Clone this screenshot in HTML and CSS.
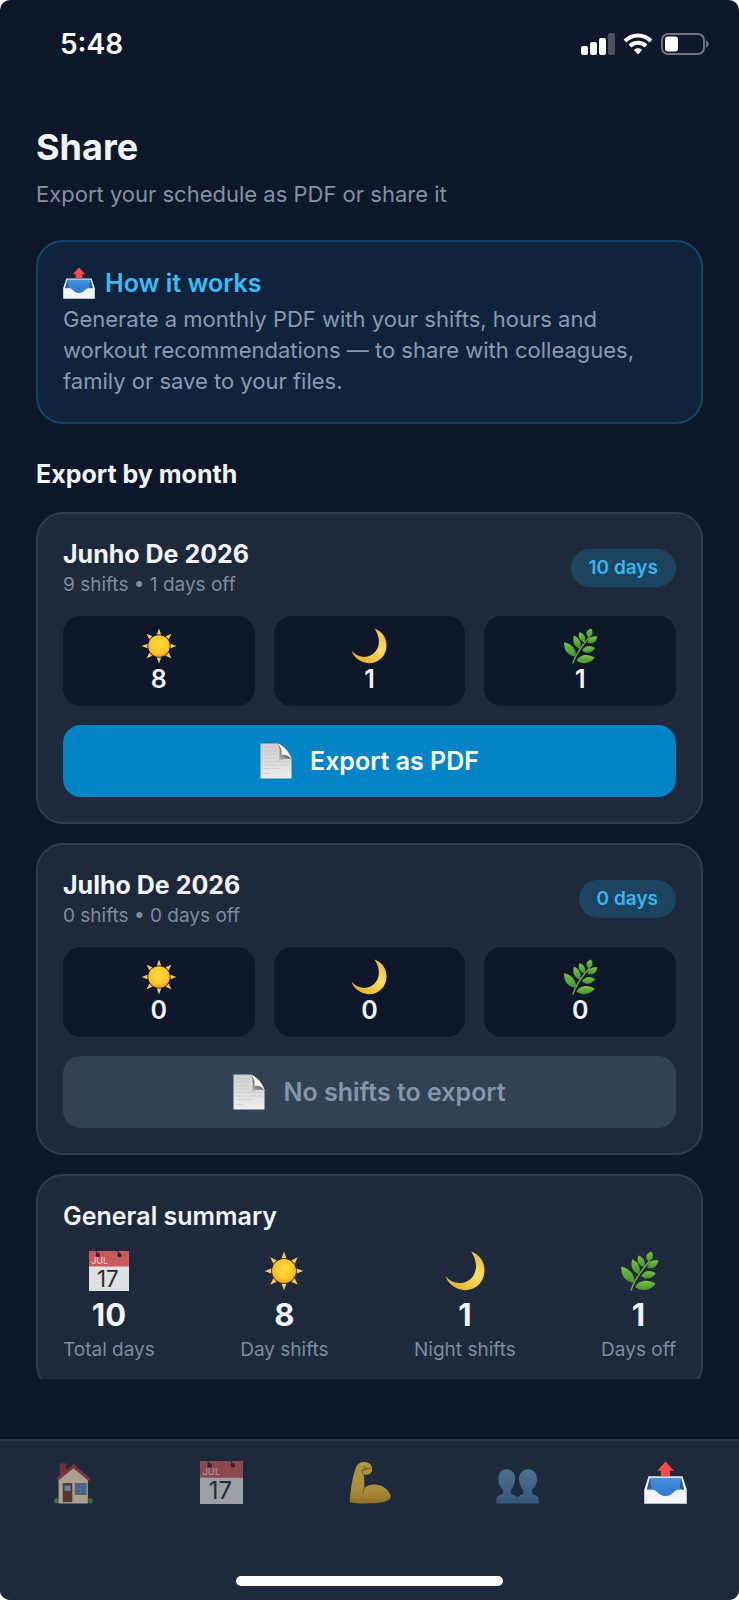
FILE: index.html
```html
<!DOCTYPE html>
<html lang="en">
<head>
    <meta charset="UTF-8">
    <meta name="viewport" content="width=device-width, initial-scale=1">
    <title>Share</title>
    <link rel="stylesheet" href="styles.css">
</head>
<body>
    <!-- shared icons -->
    <svg class="sprite" aria-hidden="true">
        <defs>
            <radialGradient id="sunFill" cx="50%" cy="40%" r="60%">
                <stop offset="0" stop-color="#ffdc3c"/>
                <stop offset="0.7" stop-color="#fec62a"/>
                <stop offset="1" stop-color="#f3a01c"/>
            </radialGradient>
            <linearGradient id="moonFill" x1="1" y1="0" x2="0.3" y2="1">
                <stop offset="0" stop-color="#e9b73c"/>
                <stop offset="0.5" stop-color="#fbdc62"/>
                <stop offset="1" stop-color="#e8b233"/>
            </linearGradient>
            <linearGradient id="leafFill" x1="0" y1="0" x2="0" y2="1">
                <stop offset="0" stop-color="#7cc043"/>
                <stop offset="1" stop-color="#43962d"/>
            </linearGradient>
            <linearGradient id="trayFill" x1="0" y1="0" x2="0" y2="1">
                <stop offset="0" stop-color="#4a92e0"/>
                <stop offset="1" stop-color="#2c78cf"/>
            </linearGradient>
            <linearGradient id="pageFill" x1="0" y1="0" x2="0" y2="1">
                <stop offset="0" stop-color="#cfcfcf"/>
                <stop offset="1" stop-color="#ececec"/>
            </linearGradient>
            <linearGradient id="curlFill" x1="1" y1="0" x2="0.2" y2="1">
                <stop offset="0.2" stop-color="#c8c8c8"/>
                <stop offset="0.6" stop-color="#6a6a6a"/>
                <stop offset="1" stop-color="#c4c4c4"/>
            </linearGradient>
            <linearGradient id="armFill" x1="0" y1="0" x2="0" y2="1">
                <stop offset="0" stop-color="#ffd545"/>
                <stop offset="0.7" stop-color="#f6c233"/>
                <stop offset="1" stop-color="#cf9420"/>
            </linearGradient>
            <linearGradient id="peopleFill" x1="0" y1="0" x2="0" y2="1">
                <stop offset="0" stop-color="#6c96bb"/>
                <stop offset="1" stop-color="#40709d"/>
            </linearGradient>
        </defs>

        <symbol id="sun" viewBox="0 0 36 36">
            <g fill="#f7c765">
                <path id="ray" d="M15.800 6.500 18 .5 20.200 6.500z"/>
                <use href="#ray" transform="rotate(45 18 18)"/>
                <use href="#ray" transform="rotate(90 18 18)"/>
                <use href="#ray" transform="rotate(135 18 18)"/>
                <use href="#ray" transform="rotate(180 18 18)"/>
                <use href="#ray" transform="rotate(225 18 18)"/>
                <use href="#ray" transform="rotate(270 18 18)"/>
                <use href="#ray" transform="rotate(315 18 18)"/>
            </g>
            <circle cx="18" cy="18" r="10.800" fill="url(#sunFill)"/>
        </symbol>

        <symbol id="moon" viewBox="0 0 36 36">
            <path d="M23.500 .5C31 3 36 10 35.500 18.500 35 28.500 27 35.500 18 35.300 9.500 35 2.500 29.500 .5 22.600 5 28.500 13 30.500 19.500 27.500 28.500 23 31 11.500 23.500 .5z" fill="url(#moonFill)"/>
        </symbol>

        <symbol id="herb" viewBox="0 0 36 36">
            <path d="M11 35C13 28 18 20 27.500 9" fill="none" stroke="#7fae52" stroke-width="1.300" stroke-linecap="round"/>
            <g fill="url(#leafFill)">
                <path d="M27 9.500C22.500 6.500 24 2.500 29 .5 31.500 4 31 7.500 27 9.500z"/>
                <path d="M25.500 15C26 9.500 30.500 7.500 35.500 8.500 34.500 14 30.500 16.500 25.500 15z"/>
                <path d="M22.500 14.500C16.500 12.500 15.800 8 17.500 4 22.500 5.800 24.500 10 22.500 14.500z"/>
                <path d="M18 21C11 18 10.300 12.500 12 7.500 17.500 10 20 15 18 21z"/>
                <path d="M20 22.500C22.500 17.500 28 16.500 33.200 20 30 25 25 26.500 20 22.500z"/>
                <path d="M13.800 28.500C5.500 28 1.500 22 2.200 14 9.800 16 14.500 21 13.800 28.500z"/>
                <path d="M14.500 32.500C17.500 26.500 26 25 32.800 29.500 28.500 36 19.500 36.800 14.500 32.500z"/>
            </g>
        </symbol>

        <symbol id="outbox" viewBox="0 0 36 36">
            <path d="M3.800 12.800H32.200L35.800 24V35.800H.2V24z" fill="#f2f3f5"/>
            <path d="M5 14H31L33.600 24H28.500C25 24 24 29.300 18 29.300S11 24 7.500 24H2.400z" fill="url(#trayFill)"/>
            <path d="M5 14 6.200 22.500 2.400 24zM31 14 29.800 22.500 33.600 24z" fill="#285993"/>
            <path d="M18 .5 25 8.200H21.800V12.800H14.200V8.200H11z" fill="#fb4b46"/>
        </symbol>

        <symbol id="page" viewBox="0 0 32 36">
            <path d="M.5 .5H18L31.500 15V35.500H.5z" fill="url(#pageFill)"/>
            <path d="M3 4.500H16M3 8H17M3 11.500H17M3 15H17M3 18.500H29M3 22H29M3 25.500H20M3 30.500H10" stroke="#c4c4c4" stroke-width=".6"/>
            <path d="M18 .5C20.500 6 20 11 18.500 18.500 22 15.500 26 15.500 31.500 16z" fill="url(#curlFill)"/>
            <path d="M18 .5C24 3 29.500 9 31.500 16 29 12.500 25.500 11.500 21.500 11.800 22 8 21 4 18 .5z" fill="#f7f7f7"/>
        </symbol>

        <symbol id="house" viewBox="0 0 36 36">
            <path d="M6.500 2H12V12H6.500z" fill="#a3303b"/>
            <circle cx="4" cy="33.200" r="2.300" fill="#4f8a3a"/>
            <circle cx="32" cy="33.200" r="2.300" fill="#4f8a3a"/>
            <path d="M5.500 14 18 4 30 15V35.500H5.500z" fill="#f3e2bd"/>
            <path d="M18 2.500 32 14.500 31 17 18 6 5 16.500 4 14.500z" fill="#b03a42"/>
            <path d="M9 18.500H17V34.500H9z" fill="#7a3d2e"/>
            <path d="M10.500 20.500H15.500V25H10.500z" fill="#83b8e6"/>
            <path d="M19.500 19H28.500V28H19.500z" fill="#4a86c5" stroke="#8d7f72"/>
            <path d="M24 19V28M19.500 23.500H28.500" stroke="#79a9d6" stroke-width=".6"/>
        </symbol>

        <symbol id="muscle" viewBox="0 0 36 36">
            <path d="M7 4.500C8.500 1.500 12 .2 16 1.200 19.500 2 20.800 5 20 8.500 19 11.200 16 12 13.200 11.200 13.800 14.500 13.500 18.500 13.800 22.500 17 19.500 23 18.800 28 21 33 23.200 36 27.500 35.800 31 33 35 24 35.500 13.500 35.500 8.500 35.500 4.500 35.300 1.500 34.500 1.800 26 3.500 13 7 4.500z" fill="url(#armFill)"/>
            <path d="M13.200 11.200C11.500 10.200 11.300 8.300 13 7.200L18.500 6M13.500 4.500 15 6.500M13.800 22.500C12.800 23.500 12.500 25 12.800 26.500" fill="none" stroke="#a8741c" stroke-linecap="round"/>
        </symbol>

        <symbol id="people" viewBox="0 0 36 36">
            <g fill="url(#peopleFill)">
                <path d="M9 7C13.500 7 16.200 10.500 16 15.500 15.800 19.500 14 22.500 12.500 24.500V27C14 29 17.500 28.500 18.500 31.500V35.500H.3V31C1 28.500 5.500 28.500 6 26.500V24.500C4 22.500 2 19.500 2 15.500 2 10.500 4.500 7 9 7z"/>
                <path d="M27 7C22.500 7 19.200 10.500 19.200 15.500 19.400 19.500 21.200 22.500 22.800 24.500V27C21.500 29 18.500 28.500 17.500 31.500V35.500H35.700V31C35 28.500 30.500 28.500 30 26.500V24.500C32 22.500 34.300 19.500 34.300 15.500 34.300 10.500 31.500 7 27 7z"/>
            </g>
        </symbol>
    </svg>

    <div class="app">
        <header class="status-bar">
            <span class="time">5:48</span>
            <div class="status-icons">
                <svg width="34" height="22" viewBox="0 0 34 22" fill="#fff" aria-label="Signal">
                    <rect x="0" y="13" width="7" height="9" rx="2"/>
                    <rect x="9" y="9" width="7" height="13" rx="2"/>
                    <rect x="18" y="5" width="7" height="17" rx="2"/>
                    <rect x="27" y="0" width="7" height="22" rx="2" opacity=".25"/>
                </svg>
                <svg width="30" height="22" viewBox="0 0 30 22" fill="none" stroke="#fff" stroke-width="4" aria-label="Wi-Fi">
                    <path d="M2 8C9.500 .5 20.500 .5 28 8"/>
                    <path d="M7 13C11.500 8.700 18.500 8.700 23 13"/>
                    <path d="M10.800 17C13 14.600 17 14.600 19.200 17L15 21.500z" fill="#fff" stroke="none"/>
                </svg>
                <svg width="48" height="22" viewBox="0 0 48 22" aria-label="Battery">
                    <rect x="1" y="1" width="42" height="20" rx="6" fill="none" stroke="#6d7380" stroke-width="2"/>
                    <rect x="4" y="3.500" width="13" height="15" rx="3" fill="#fff"/>
                    <path d="M45 7.500C48.500 8.500 48.500 13.500 45 14.500z" fill="#6d7380"/>
                </svg>
            </div>
        </header>

        <main class="content">
            <h1>Share</h1>
            <p class="subtitle">Export your schedule as PDF or share it</p>

            <section class="info-card">
                <h2><svg class="icon"><use href="#outbox"/></svg>How it works</h2>
                <p>Generate a monthly PDF with your shifts, hours and workout recommendations — to share with colleagues, family or save to your files.</p>
            </section>

            <h2 class="section-title">Export by month</h2>

            <section class="card">
                <div class="card-head">
                    <div>
                        <h3>Junho De 2026</h3>
                        <p>9 shifts • 1 days off</p>
                    </div>
                    <span class="badge">10 days</span>
                </div>
                <div class="tiles">
                    <div class="tile"><svg class="icon"><use href="#sun"/></svg><b>8</b></div>
                    <div class="tile"><svg class="icon"><use href="#moon"/></svg><b>1</b></div>
                    <div class="tile"><svg class="icon"><use href="#herb"/></svg><b>1</b></div>
                </div>
                <button type="button" class="export-btn"><svg class="icon"><use href="#page"/></svg>Export as PDF</button>
            </section>

            <section class="card">
                <div class="card-head">
                    <div>
                        <h3>Julho De 2026</h3>
                        <p>0 shifts • 0 days off</p>
                    </div>
                    <span class="badge">0 days</span>
                </div>
                <div class="tiles">
                    <div class="tile"><svg class="icon"><use href="#sun"/></svg><b>0</b></div>
                    <div class="tile"><svg class="icon"><use href="#moon"/></svg><b>0</b></div>
                    <div class="tile"><svg class="icon"><use href="#herb"/></svg><b>0</b></div>
                </div>
                <button type="button" class="export-btn" disabled><svg class="icon"><use href="#page"/></svg>No shifts to export</button>
            </section>

            <section class="card summary">
                <h3>General summary</h3>
                <div class="stats">
                    <div class="stat">
                        <svg class="icon calendar" viewBox="0 0 36 36">
                            <path d="M0 0H36V36H0z" fill="#dfe0e2"/>
                            <path d="M0 0H36V14H0z" fill="#c9595f"/>
                            <path d="M8 4 6.500 0M27.500 4 26 0" stroke="#3c2028"/>
                            <circle cx="8" cy="3.800" r="1.900" fill="#3c2028"/>
                            <circle cx="27.500" cy="3.800" r="1.900" fill="#3c2028"/>
                            <text class="cal-month" x="2" y="12">JUL</text>
                            <text class="cal-day" x="17" y="32">17</text>
                        </svg>
                        <b>10</b><span>Total days</span>
                    </div>
                    <div class="stat"><svg class="icon"><use href="#sun"/></svg><b>8</b><span>Day shifts</span></div>
                    <div class="stat"><svg class="icon"><use href="#moon"/></svg><b>1</b><span>Night shifts</span></div>
                    <div class="stat"><svg class="icon"><use href="#herb"/></svg><b>1</b><span>Days off</span></div>
                </div>
            </section>
        </main>

        <nav class="tab-bar">
            <div class="tabs">
                <a href="#home" aria-label="Home"><svg class="icon"><use href="#house"/></svg></a>
                <a href="#schedule" aria-label="Schedule">
                    <svg class="icon calendar" viewBox="0 0 36 36">
                        <path d="M0 0H36V36H0z" fill="#dfe0e2"/>
                        <path d="M0 0H36V14H0z" fill="#c9595f"/>
                        <path d="M8 4 6.500 0M27.500 4 26 0" stroke="#3c2028"/>
                        <circle cx="8" cy="3.800" r="1.900" fill="#3c2028"/>
                        <circle cx="27.500" cy="3.800" r="1.900" fill="#3c2028"/>
                        <text class="cal-month" x="2" y="12">JUL</text>
                        <text class="cal-day" x="17" y="32">17</text>
                    </svg>
                </a>
                <a href="#workout" aria-label="Workout"><svg class="icon"><use href="#muscle"/></svg></a>
                <a href="#team" aria-label="Team"><svg class="icon"><use href="#people"/></svg></a>
                <a href="#share" aria-label="Share" class="active"><svg class="icon"><use href="#outbox"/></svg></a>
            </div>
            <div class="home-indicator"></div>
        </nav>
    </div>
</body>
</html>
```
FILE: styles.css
```css
* {
    box-sizing: border-box;
}
body {
    margin: 0;
    background: #fff;
    font-family: Inter, "Liberation Sans", sans-serif;
    color: #f1f5f9;
}
h1, h2, h3, p {
    margin: 0;
}
.sprite {
    position: absolute;
    width: 0;
    height: 0;
}
.icon {
    display: block;
    flex: none;
    width: 36px;
    height: 36px;
}
.cal-month {
    font-size: 8px;
    fill: #f3dcdd;
}
.cal-day {
    font-size: 20px;
    fill: #2c2c2e;
    text-anchor: middle;
}
.app {
    display: flex;
    flex-direction: column;
    height: 100vh;
    background: #0f172a;
    border-radius: 10px;
    overflow: hidden;
}

/* Status bar */
.status-bar {
    flex: none;
    display: flex;
    justify-content: space-between;
    align-items: center;
    height: 88px;
    padding: 0 30px 0 60px;
}
.time {
    font-size: 28px;
    font-weight: 600;
    color: #fff;
}
.status-icons {
    display: flex;
    align-items: center;
    gap: 8px;
}

/* Page */
.content {
    flex: 1;
    min-height: 0;
    overflow: hidden;
    padding: 36px 36px 0;
    margin-bottom: 60px;
}
h1 {
    font-size: 36px;
    line-height: 46px;
    font-weight: 700;
}
.subtitle {
    margin-top: 8px;
    font-size: 22px;
    line-height: 32px;
    color: #8490a5;
}
.info-card {
    margin-top: 30px;
    padding: 25px;
    border: 2px solid #154766;
    border-radius: 27px;
    background: #0f243c;
}
.info-card h2 {
    display: flex;
    align-items: center;
    gap: 10px;
    font-size: 25px;
    line-height: 32px;
    font-weight: 600;
    color: #38bdf8;
}
.info-card .icon {
    width: 32px;
    height: 32px;
}
.info-card p {
    margin-top: 5px;
    font-size: 22px;
    line-height: 31px;
    color: #8b9ab1;
}
.section-title {
    margin: 34px 0 22px;
    font-size: 25px;
    line-height: 32px;
    font-weight: 700;
}

/* Month cards */
.card {
    margin-bottom: 19px;
    padding: 25px;
    border: 2px solid #2f3d50;
    border-radius: 27px;
    background: #1e293b;
}
.card h3 {
    font-size: 25px;
    line-height: 30px;
    font-weight: 700;
}
.card-head {
    display: flex;
    justify-content: space-between;
    align-items: center;
}
.card-head p {
    margin-top: 4px;
    font-size: 19px;
    line-height: 24px;
    color: #7f8ca1;
}
.badge {
    padding: 7px 18px;
    border-radius: 19px;
    background: #1c435f;
    color: #38b6f1;
    font-size: 19px;
    line-height: 24px;
    font-weight: 600;
}
.tiles {
    display: grid;
    grid-template-columns: repeat(3, 1fr);
    gap: 19px;
    margin: 19px 0;
}
.tile {
    display: flex;
    flex-direction: column;
    align-items: center;
    padding: 12px 0;
    border-radius: 18px;
    background: #0f172a;
}
.tile b {
    font-size: 25px;
    line-height: 30px;
    font-weight: 600;
}
.export-btn {
    display: flex;
    justify-content: center;
    align-items: center;
    gap: 18px;
    width: 100%;
    height: 72px;
    border: none;
    border-radius: 18px;
    background: #0284c7;
    color: #fff;
    font: inherit;
    font-size: 25px;
    font-weight: 600;
    cursor: pointer;
}
.export-btn .icon {
    width: 32px;
}
.export-btn:disabled {
    background: #334155;
    color: #8795ab;
    cursor: default;
}

/* Summary */
.summary h3 {
    font-weight: 600;
}
.stats {
    display: flex;
    justify-content: space-between;
    margin-top: 20px;
}
.stat {
    display: flex;
    flex-direction: column;
    align-items: center;
}
.stat .icon {
    width: 40px;
    height: 40px;
}
.stat b {
    margin-top: 4px;
    font-size: 31px;
    line-height: 40px;
    font-weight: 700;
}
.stat span {
    font-size: 19px;
    line-height: 30px;
    color: #7f8ca1;
}

/* Bottom tabs */
.tab-bar {
    flex: none;
    display: flex;
    flex-direction: column;
    justify-content: space-between;
    align-items: center;
    height: 161px;
    padding: 20px 0 14px;
    border-top: 2px solid #2c394d;
    background: #1e293b;
}
.tabs {
    display: grid;
    grid-template-columns: repeat(5, 1fr);
    justify-items: center;
    width: 100%;
}
.tabs a {
    opacity: 0.65;
}
.tabs a.active {
    opacity: 1;
}
.tabs .icon {
    width: 43px;
    height: 43px;
}
.home-indicator {
    width: 36%;
    height: 10px;
    border-radius: 5px;
    background: #fff;
}
```
